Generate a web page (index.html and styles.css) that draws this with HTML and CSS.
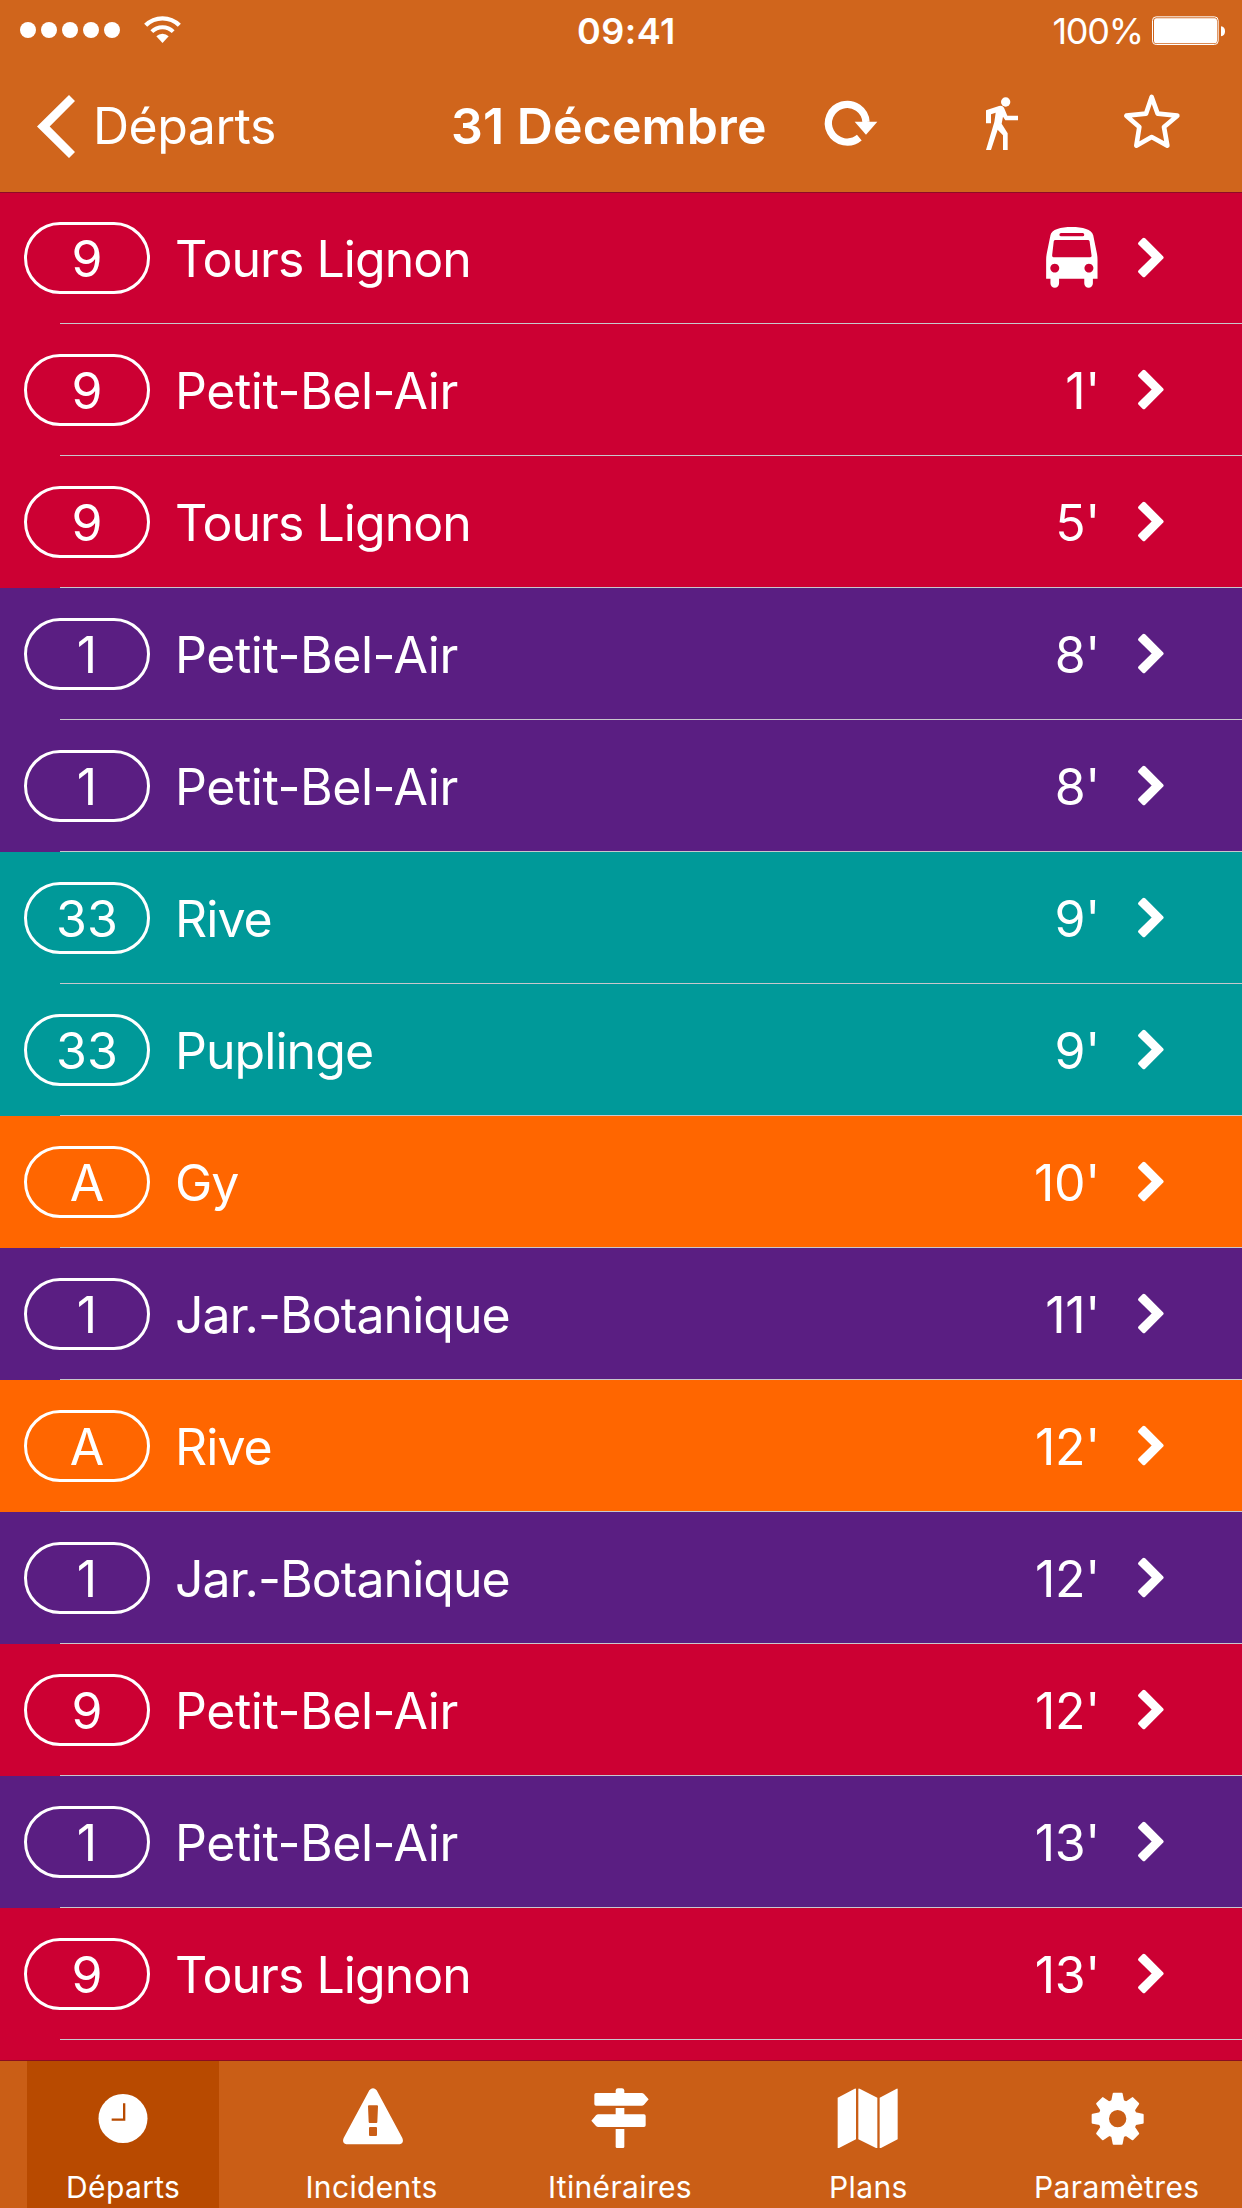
FILE: index.html
```html
<!DOCTYPE html>
<html lang="fr">
<head>
<meta charset="utf-8">
<title>Départs</title>
<link rel="stylesheet" href="styles.css">
</head>
<body>
<svg class="defs" width="0" height="0" aria-hidden="true">
  <symbol id="chevron" viewBox="471 140 80 124">
    <path d="M485 143Q489 139 493 143L548 198Q552 202 548 206L493 261Q489 265 485 261L473 249Q469 245 473 241L513 202L473 163Q469 159 473 155Z"/>
  </symbol>
  <symbol id="bus" viewBox="198 111 156 184">
    <path fill-rule="evenodd" d="M211 136C214 118 242 111 275 111S336 118 340 136L351 190Q353 200 353 210V267H339V281A13 13 0 0 1 313 281V267H237V281A13 13 0 0 1 211 281V267H198V210Q198 200 200 190ZM243 129A5 5 0 0 0 243 139H308A5 5 0 0 0 308 129ZM226 150Q222 150 221 154L216 197Q216 202 220 202H331Q336 202 335 197L329 154Q328 150 324 150ZM224 221.500A13.500 13.500 0 1 0 224.100 221.500ZM327 221.500A13.500 13.500 0 1 0 327.100 221.500Z"/>
  </symbol>
</svg>

<div class="app">
  <header class="header">
    <div class="status">
      <div class="signal">
        <span class="dot"></span><span class="dot"></span><span class="dot"></span><span class="dot"></span><span class="dot"></span>
        <svg class="wifi" viewBox="432 48 111 81">
          <path class="line" stroke-width="13" d="M437 76A71 71 0 0 1 538 76"/>
          <path class="line" stroke-width="12" d="M455.500 95A45 45 0 0 1 519.500 95"/>
          <path d="M469 109A26 26 0 0 1 506 109L487.500 129Z"/>
        </svg>
      </div>
      <time class="clock">09:41</time>
      <div class="power">
        <span class="percent">100%</span>
        <svg class="battery" viewBox="1056 47 219 87">
          <rect class="line" x="1057.500" y="49.500" width="197" height="83" rx="11" stroke-width="3"/>
          <rect x="1062" y="54" width="189" height="75" rx="7"/>
          <path d="M1263 78Q1275 80 1275 93T1263 108Z"/>
        </svg>
      </div>
    </div>
    <nav class="nav">
      <a class="back">
        <svg class="back-icon" viewBox="111 285 114 189"><path d="M207 285L225 303L149 379.500L225 456L207 474L111 379.500Z"/></svg>
        <span class="back-label">Départs</span>
      </a>
      <h1 class="title">31 Décembre</h1>
      <div class="actions">
        <svg class="action" viewBox="66 279 180 180">
          <path class="line" stroke-width="22" d="M178 413A56.500 56.500 0 1 1 198 366"/>
          <path d="M164 365H232L198 404Z"/>
        </svg>
        <svg class="action" viewBox="516 279 180 180">
          <circle cx="617" cy="306" r="14"/>
          <path d="M558 331L597 318Q607 315 612 323L622 347H654V361H616L609 350L605 371L623 400V450H609V406L593 389L573 450H558L583 366L587 338L573 343V370H558Z"/>
        </svg>
        <svg class="action" viewBox="966 279 180 180">
          <path class="line" stroke-width="14" stroke-linejoin="round" d="M1055 291L1073 341L1132 347L1092 381L1102 437L1055 411L1009 437L1018 381L979 347L1038 341Z"/>
        </svg>
      </div>
    </nav>
  </header>

  <main class="list">
    <div class="row red"><span class="line-no">9</span><span class="dest">Tours Lignon</span><svg class="bus"><use href="#bus"/></svg><svg class="chevron"><use href="#chevron"/></svg></div>
    <div class="row red"><span class="line-no">9</span><span class="dest petit">Petit-Bel-Air</span><span class="wait">1'</span><svg class="chevron"><use href="#chevron"/></svg></div>
    <div class="row red"><span class="line-no">9</span><span class="dest">Tours Lignon</span><span class="wait">5'</span><svg class="chevron"><use href="#chevron"/></svg></div>
    <div class="row purple"><span class="line-no">1</span><span class="dest petit">Petit-Bel-Air</span><span class="wait">8'</span><svg class="chevron"><use href="#chevron"/></svg></div>
    <div class="row purple"><span class="line-no">1</span><span class="dest petit">Petit-Bel-Air</span><span class="wait">8'</span><svg class="chevron"><use href="#chevron"/></svg></div>
    <div class="row teal"><span class="line-no">33</span><span class="dest">Rive</span><span class="wait">9'</span><svg class="chevron"><use href="#chevron"/></svg></div>
    <div class="row teal"><span class="line-no">33</span><span class="dest">Puplinge</span><span class="wait">9'</span><svg class="chevron"><use href="#chevron"/></svg></div>
    <div class="row orange"><span class="line-no">A</span><span class="dest">Gy</span><span class="wait">10'</span><svg class="chevron"><use href="#chevron"/></svg></div>
    <div class="row purple"><span class="line-no">1</span><span class="dest">Jar.-Botanique</span><span class="wait">11'</span><svg class="chevron"><use href="#chevron"/></svg></div>
    <div class="row orange"><span class="line-no">A</span><span class="dest">Rive</span><span class="wait">12'</span><svg class="chevron"><use href="#chevron"/></svg></div>
    <div class="row purple"><span class="line-no">1</span><span class="dest">Jar.-Botanique</span><span class="wait">12'</span><svg class="chevron"><use href="#chevron"/></svg></div>
    <div class="row red"><span class="line-no">9</span><span class="dest petit">Petit-Bel-Air</span><span class="wait">12'</span><svg class="chevron"><use href="#chevron"/></svg></div>
    <div class="row purple"><span class="line-no">1</span><span class="dest petit">Petit-Bel-Air</span><span class="wait">13'</span><svg class="chevron"><use href="#chevron"/></svg></div>
    <div class="row red"><span class="line-no">9</span><span class="dest">Tours Lignon</span><span class="wait">13'</span><svg class="chevron"><use href="#chevron"/></svg></div>
  </main>

  <footer class="tabs">
    <a class="tab active">
      <svg class="tab-icon" viewBox="274 168 192 192">
        <circle cx="370" cy="265.500" r="73.500"/>
        <path class="hands" d="M373.500 220V269H336"/>
      </svg>
      <span>Départs</span>
    </a>
    <a class="tab">
      <svg class="tab-icon" viewBox="1020 168 192 192">
        <path fill-rule="evenodd" d="M1108 181Q1119 169 1130 181L1207 324Q1213 339 1199 343H1039Q1025 339 1031 324ZM1107 226Q1104 226 1104 229L1106 275Q1106 279 1109 279H1129Q1132 279 1132 275L1134 229Q1134 226 1131 226ZM1110 291Q1107 291 1107 294V315Q1107 318 1110 318H1128Q1131 318 1131 315V294Q1131 291 1128 291Z"/>
      </svg>
      <span>Incidents</span>
    </a>
    <a class="tab">
      <svg class="tab-icon" viewBox="504 168 192 192">
        <path d="M587 189V181Q588 175 594 175H606Q612 175 613 181V189H665Q669 189 672 192L686 208L672 224Q669 227 665 227H528Q523 227 523 222V194Q523 189 528 189Z"/>
        <path d="M587 234H613V253H672Q677 253 677 258V286Q677 291 672 291H535Q531 291 528 288L514 272L528 256Q531 253 535 253H587Z"/>
        <path d="M587 297H613V350Q613 354 609 354H591Q587 354 587 350Z"/>
      </svg>
      <span>Itinéraires</span>
    </a>
    <a class="tab">
      <svg class="tab-icon" viewBox="43 168 192 192">
        <path d="M48 203L99 176Q103 174 103 178V328L52 354H48ZM110 178Q110 174 114 176L167 203V354H163L110 328ZM174 203L225 176Q228 175 228 178V328L178 354H174Z"/>
      </svg>
      <span>Plans</span>
    </a>
    <a class="tab">
      <svg class="tab-icon" viewBox="-98 -98 192 192">
        <circle class="line" r="42" stroke-width="32"/>
        <g>
          <path id="tooth" d="M-12 -78H12Q15 -78 15 -75L20 -50H-20L-15 -75Q-15 -78 -12 -78Z"/>
          <use href="#tooth" transform="rotate(45)"/>
          <use href="#tooth" transform="rotate(90)"/>
          <use href="#tooth" transform="rotate(135)"/>
          <use href="#tooth" transform="rotate(180)"/>
          <use href="#tooth" transform="rotate(225)"/>
          <use href="#tooth" transform="rotate(270)"/>
          <use href="#tooth" transform="rotate(315)"/>
        </g>
      </svg>
      <span>Paramètres</span>
    </a>
  </footer>
</div>
</body>
</html>
```
FILE: styles.css
```css
* {
  box-sizing: border-box;
}

body {
  margin: 0;
  color: #fff;
  font-family: Inter, "Liberation Sans", sans-serif;
  font-size: 50px;
  line-height: 60px;
}

svg {
  display: block;
  flex: none;
  fill: #fff;
}

.line {
  fill: none;
  stroke: #fff;
}

.defs {
  display: none;
}

.app {
  display: flex;
  flex-direction: column;
  width: 1242px;
  height: 2208px;
  overflow: hidden;
  background: #cc0033;
}

/* Header */

.header {
  position: relative;
  flex: none;
  height: 192px;
  background: #d0651c;
  box-shadow: 0 1px 0 #8e0b27;
}

.status {
  display: flex;
  align-items: center;
  height: 60px;
  padding: 2px 17px 0 20px;
  font-size: 36px;
}

.signal {
  display: flex;
  align-items: center;
  gap: 5px;
  width: 557px;
}

.dot {
  width: 16px;
  height: 16px;
  margin-top: -2px;
  border-radius: 50%;
  background: #fff;
}

.wifi {
  width: 37px;
  height: 27px;
  margin: -3px 0 0 19px;
}

.clock {
  font-weight: 600;
  letter-spacing: 0.5px;
}

.power {
  display: flex;
  align-items: center;
  gap: 9px;
  margin-left: auto;
}

.percent {
  letter-spacing: -1.2px;
}

.battery {
  width: 73px;
  height: 29px;
  margin-top: -1px;
}

.nav {
  display: grid;
  grid-template-columns: 451px 371px 1fr;
  height: 132px;
}

.back {
  display: flex;
  align-items: center;
  gap: 18px;
  padding-left: 37px;
}

.back-icon {
  width: 38px;
  height: 63px;
}

.back-label {
  letter-spacing: -0.5px;
}

.title {
  align-self: center;
  margin: 0;
  font-size: 50px;
  font-weight: 600;
  letter-spacing: 0.1px;
  white-space: nowrap;
}

.actions {
  display: flex;
  gap: 90px;
  padding-top: 33px;
}

.action {
  width: 60px;
  height: 60px;
}

/* Departures */

.list {
  flex: 1;
  min-height: 0;
  overflow: hidden;
}

.row {
  display: flex;
  align-items: center;
  height: 132px;
  padding: 0 78px 0 24px;
  background-image: linear-gradient(#c8c7cc, #c8c7cc);
  background-position: 60px 131px;
  background-size: 100% 1px;
  background-repeat: no-repeat;
}

.red {
  background-color: #cc0033;
}

.purple {
  background-color: #5a1e82;
}

.teal {
  background-color: #009999;
}

.orange {
  background-color: #ff6600;
}

.line-no {
  width: 126px;
  height: 72px;
  padding-top: 4px;
  border: 3px solid #fff;
  border-radius: 36px;
  text-align: center;
}

.dest {
  flex: 1;
  padding: 2px 0 0 25px;
  letter-spacing: -0.95px;
}

.petit {
  letter-spacing: -0.45px;
}

.wait {
  padding-top: 2px;
  margin-right: 38px;
  letter-spacing: -0.3px;
}

.bus {
  width: 52px;
  height: 61px;
  margin: -1px 40px 0 0;
}

.chevron {
  width: 26px;
  height: 41px;
  margin-top: -1px;
}

/* Tab bar */

.tabs {
  display: grid;
  grid-template-columns: repeat(5, 1fr);
  justify-items: center;
  flex: none;
  height: 148px;
  border-top: 1px solid #8a0d22;
  background: #ca5e16;
  font-size: 30px;
  line-height: 36px;
  letter-spacing: 0.35px;
}

.tab {
  display: flex;
  flex-direction: column;
  align-items: center;
  gap: 19px;
  width: 192px;
  margin-right: 2px;
  padding-top: 25px;
}

.active {
  background: #b84a00;
}

.tab-icon {
  width: 64px;
  height: 64px;
}

.hands {
  fill: none;
  stroke: #b84a00;
  stroke-width: 7px;
}
```
